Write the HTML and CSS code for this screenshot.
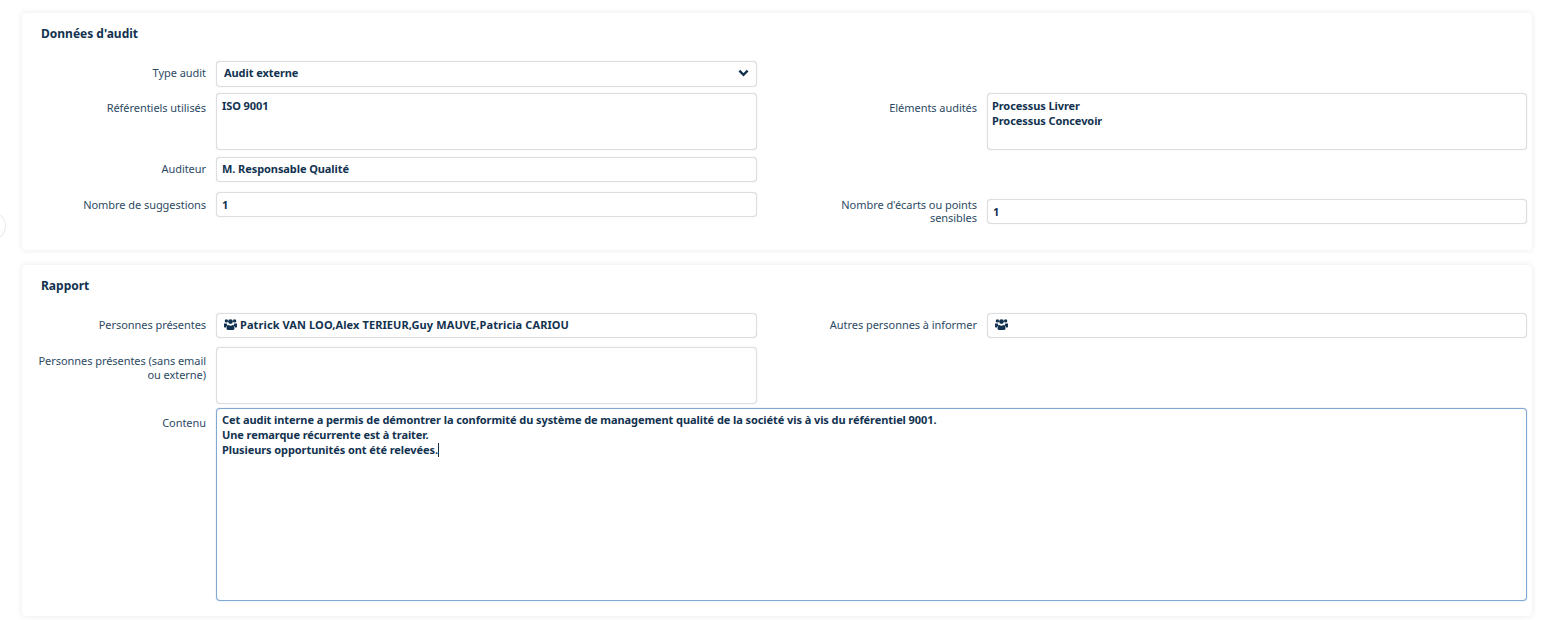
FILE: index.html
```html
<!DOCTYPE html>
<html lang="fr">
<head>
<meta charset="utf-8">
<title>Audit</title>
<link rel="stylesheet" href="styles.css">
</head>
<body>
<span class="side-toggle"></span>
<section class="card card-audit">
  <h2 class="card-title">Données d'audit</h2>
  <div class="columns">
    <div class="stack">
      <div class="row"><label class="label">Type audit</label><div class="field field-select">Audit externe<svg class="chevron" viewBox="0 0 12 8"><path d="M1.5 1.5 6 6l4.5-4.5" fill="none" stroke="currentColor" stroke-width="2.6"/></svg></div></div>
      <div class="row row-ref"><label class="label label-low">Référentiels utilisés</label><div class="field field-area">ISO 9001</div></div>
      <div class="row row-auditor"><label class="label">Auditeur</label><div class="field field-auditor">M. Responsable Qualité</div></div>
      <div class="row row-suggest"><label class="label label-suggest">Nombre de suggestions</label><div class="field">1</div></div>
    </div>
    <div class="stack stack-right-audit">
      <div class="row"><label class="label label-low">Eléments audités</label><div class="field field-area field-area-right">Processus Livrer<br>Processus Concevoir</div></div>
      <div class="row row-gaps"><label class="label label-gaps">Nombre d'écarts ou points sensibles</label><div class="field">1</div></div>
    </div>
  </div>
</section>
<section class="card card-report">
  <h2 class="card-title">Rapport</h2>
  <div class="columns">
    <div class="stack">
      <div class="row"><label class="label">Personnes présentes</label><div class="field field-users"><svg class="users" viewBox="0 0 13 11"><g fill="currentColor"><circle cx="2.4" cy="1.9" r="1.7"/><circle cx="10.6" cy="1.9" r="1.7"/><circle cx="6.5" cy="2.6" r="2.4"/><path d="M0 4.400h2.700c.2.900.6 1.500 1.200 2-1.100.3-1.800 1.100-2 2.200H.8C.3 8.600 0 8.300 0 7.800z"/><path d="M13 4.400h-2.700c-.2.900-.6 1.500-1.200 2 1.100.3 1.800 1.100 2 2.200h1.100c.5 0 .8-.3.800-.8z"/><path d="M4.300 6.100c1.300.8 3.100.8 4.400 0 1.100.3 1.700 1.300 1.700 2.700v1c0 .7-.5 1.200-1.200 1.200H3.800c-.7 0-1.200-.5-1.200-1.200v-1c0-1.400.6-2.400 1.700-2.700z"/></g></svg><span class="names">Patrick VAN LOO,Alex TERIEUR,Guy MAUVE,Patricia CARIOU</span></div></div>
      <div class="row row-extern"><label class="label label-extern">Personnes présentes (sans email ou externe)</label><div class="field field-area"></div></div>
    </div>
    <div class="stack">
      <div class="row"><label class="label">Autres personnes à informer</label><div class="field field-users"><svg class="users" viewBox="0 0 13 11"><g fill="currentColor"><circle cx="2.4" cy="1.9" r="1.7"/><circle cx="10.6" cy="1.9" r="1.7"/><circle cx="6.5" cy="2.6" r="2.4"/><path d="M0 4.400h2.700c.2.900.6 1.500 1.200 2-1.100.3-1.800 1.100-2 2.200H.8C.3 8.600 0 8.300 0 7.800z"/><path d="M13 4.400h-2.700c-.2.900-.6 1.500-1.200 2 1.100.3 1.800 1.100 2 2.200h1.100c.5 0 .8-.3.800-.8z"/><path d="M4.300 6.100c1.300.8 3.100.8 4.400 0 1.100.3 1.700 1.300 1.700 2.700v1c0 .7-.5 1.200-1.200 1.200H3.800c-.7 0-1.200-.5-1.200-1.200v-1c0-1.400.6-2.400 1.700-2.700z"/></g></svg></div></div>
    </div>
  </div>
  <div class="row row-content"><label class="label label-content">Contenu</label><div class="field field-content">Cet audit interne a permis de démontrer la conformité du système de management qualité de la société vis à vis du référentiel 9001.<br>Une remarque récurrente est à traiter.<br>Plusieurs opportunités ont été relevées.<span class="caret"></span></div></div>
</section>
</body>
</html>
```
FILE: styles.css
```css
* { box-sizing: border-box; }
html, body { height: 100%; }
body {
  margin: 0;
  padding: 13px 26px 0 22px;
  background: #fff;
  color: #12324f;
  font-family: "Noto Sans", "Open Sans", sans-serif;
  font-size: 11px;
  overflow: hidden;
}
.side-toggle {
  position: absolute;
  left: -12px;
  top: 214px;
  width: 18px;
  height: 24px;
  border: 1px solid #e8e8e8;
  border-radius: 50%;
  background: #fff;
}
.card {
  background: #fff;
  border-radius: 4px;
  box-shadow: 0 0 6px rgba(0, 0, 0, .09);
  padding: 0 5px 0 9px;
}
.card-audit { height: 237px; margin-bottom: 15px; }
.card-report { height: 351px; }
.card-title {
  margin: 0;
  padding: 13px 0 0 10px;
  height: 48px;
  font-size: 12px;
  line-height: 16px;
  font-weight: 700;
  color: #12324f;
}
.columns { display: grid; grid-template-columns: 726px 725px; column-gap: 45px; }
.stack-right-audit { padding-top: 32px; }
.row { display: flex; column-gap: 10px; align-items: flex-start; }
.row-ref { margin-top: 6px; }
.row-auditor { margin-top: 7px; }
.row-suggest { margin-top: 10px; }
.row-gaps { margin-top: 49px; }
.row-extern { margin-top: 9px; }
.row-content { margin-top: 4px; }
.label {
  flex: 0 0 175px;
  text-align: right;
  color: #2d4a63;
  font-size: 11px;
  letter-spacing: -.05px;
  line-height: 13px;
  padding-top: 5px;
}
.label-low { padding-top: 8px; }
.label-suggest { padding-top: 6px; }
.label-gaps { margin-top: -1px; padding-top: 0; }
.label-extern { padding-top: 7px; line-height: 14px; }
.label-content { padding-top: 8px; }
.field {
  flex: 1;
  min-width: 0;
  height: 25px;
  border: 1px solid #dcdee0;
  border-radius: 4px;
  background: #fff;
  box-shadow: 0 0 1px rgba(0, 0, 0, .18);
  padding: 4px 5px;
  font-weight: 700;
  font-size: 11px;
  letter-spacing: -.08px;
  line-height: 15px;
  color: #12324f;
}
.field-select { height: 26px; padding: 0 7px 3px; display: flex; align-items: center; justify-content: space-between; }
.field-area { height: 57px; }
.field-area-right { padding-left: 4px; }
.field-auditor { padding-top: 3px; }
.field-users { display: flex; align-items: center; column-gap: 3px; padding: 0 7px 2px; }
.names { letter-spacing: .1px; }
.field-content {
  height: 193px;
  padding: 3px 5px;
  border-color: #7fa9d3;
  box-shadow: 0 0 1px #7fa9d3;
}
.chevron { width: 11px; height: 8px; }
.users { width: 13px; height: 11px; flex: none; }
.caret { display: inline-block; height: 14px; border-left: 1px solid #12324f; vertical-align: text-bottom; }
```
